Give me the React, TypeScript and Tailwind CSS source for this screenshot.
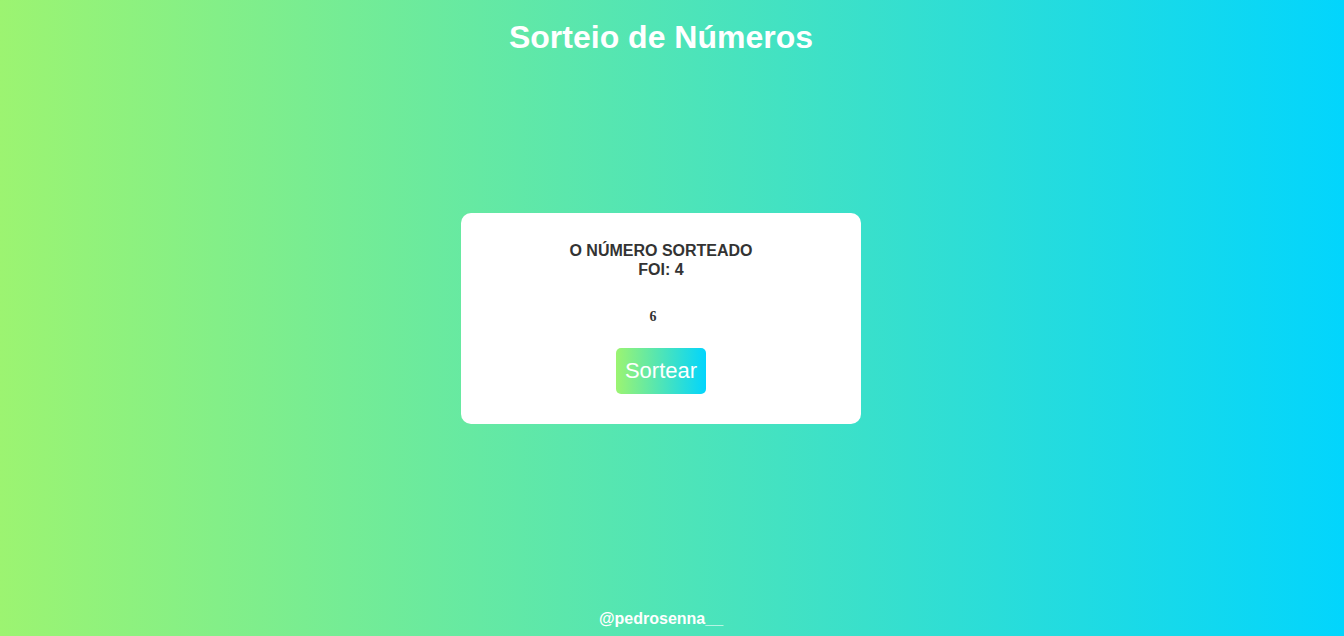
export default function App() {
  return (
    <div
      className="grid h-[636px] w-full grid-rows-[1fr_auto_1fr] bg-[linear-gradient(to_right,#9cf471,#02d5fd)] pr-[22px] text-white"
      style={{ fontFamily: '"Liberation Sans", Arial, sans-serif' }}
    >
      {/* Header */}
      <div className="flex justify-center pt-[19px]">
        <h1 className="text-[32px] font-bold leading-[37px]">Sorteio de Números</h1>
      </div>

      {/* Card */}
      <div className="flex justify-center">
        <div className="flex h-[211px] w-[400px] flex-col items-center rounded-[10px] bg-white pt-[28px]">
          <h2 className="w-[200px] text-center text-base font-bold uppercase leading-[19px] text-[#333]">
            O número sorteado foi: 4
          </h2>
          <p
            className="mt-[30px] mr-[16px] text-[14px] font-bold leading-[16px] text-[#333]"
            style={{ fontFamily: '"Liberation Serif", "Times New Roman", serif' }}
          >
            6
          </p>
          <button className="mt-[23px] h-[46px] w-[90px] rounded-[5px] bg-[linear-gradient(to_right,#9cf471,#02d5fd)] text-[22px] leading-[26px] text-white">
            Sortear
          </button>
        </div>
      </div>

      {/* Footer */}
      <div className="flex items-end justify-center pb-[8px]">
        <span className="text-base font-bold leading-[18px]">@pedrosenna__</span>
      </div>
    </div>
  );
}
